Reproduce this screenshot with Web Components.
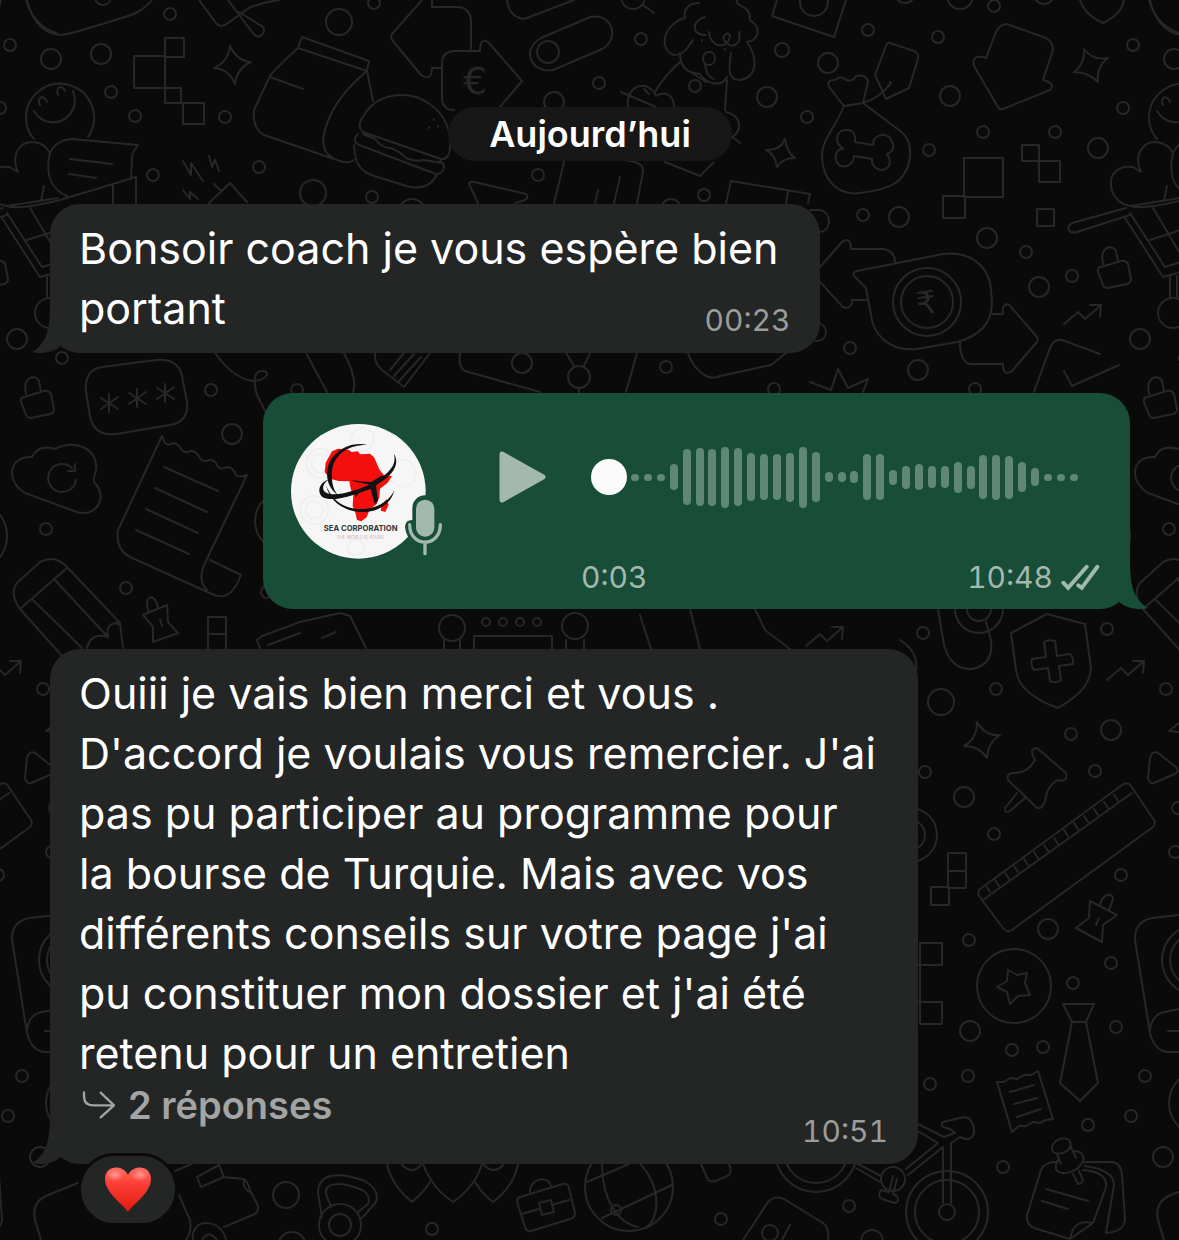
<!DOCTYPE html>
<html lang="fr">
<head>
<meta charset="UTF-8">
<meta name="viewport" content="width=device-width, initial-scale=1">
<title>Discussion</title>
<style>
    body {
        margin: 0;
        background: #0a0a0a;
        color: #fff;
        font-family: Inter, "Liberation Sans", sans-serif;
    }
</style>
</head>
<body>
<chat-screen>
    <date-pill>Aujourd’hui</date-pill>
    <chat-bubble time="00:23">Bonsoir coach je vous espère bien<br>portant</chat-bubble>
    <voice-bubble duration="0:03" time="10:48"></voice-bubble>
    <chat-bubble time="10:51">Ouiii je vais bien merci et vous .<br>D'accord je voulais vous remercier. J'ai<br>pas pu participer au programme pour<br>la bourse de Turquie. Mais avec vos<br>différents conseils sur votre page j'ai<br>pu constituer mon dossier et j'ai été<br>retenu pour un entretien
        <reply-link slot="replies">2 réponses</reply-link>
        <heart-reaction slot="reaction"></heart-reaction>
    </chat-bubble>
</chat-screen>

<script>
// circles scattered between the doodles: [x, y, radius]
const DOTS = [
    [170,14,6],[10,45,6],[51,59,10],[101,54,10],[111,92,6],[135,116,6],[225,117,6],[339,22,13],[374,3,6],
    [153,175,6],[259,167,6],[313,193,13],[372,197,6],[412,212,13],[538,175,6],[554,102,10],[548,52,11],
    [0,108,6],[599,83,6],[641,39,6],[782,50,7],[828,63,10],[695,86,6],[767,97,10],[807,117,6],[868,30,6],
    [938,37,6],[950,96,10],[929,150,6],[994,6,6],[983,132,6],[1055,132,6],[1098,148,10],[704,195,6],
    [671,209,10],[905,-7,10],[960,-4,13],[1044,-6,10],[103,-3,8],[814,2,14],[633,-3,12],[863,215,6],
    [899,217,10],[987,238,10],[1026,252,6],[1039,287,10],[1072,276,6],[17,339,10],[850,348,6],[918,370,10],
    [975,389,6],[817,332,9],[62,358,6],[211,390,6],[232,434,10],[46,529,6],[126,588,6],[267,592,6],
    [297,390,6],[522,363,10],[579,377,11],[666,367,6],[774,389,6],[923,633,6],[996,689,6],[941,702,13],
    [1107,629,6],[43,689,6],[1071,734,6],[1111,730,10],[925,772,6],[1095,771,6],[964,797,10],[994,834,6],
    [1121,875,6],[1048,929,10],[52,852,6],[55,808,6],[969,940,6],[1111,963,6],[1073,983,6],[970,1031,10],
    [1012,1050,6],[1043,1047,6],[1116,1027,6],[968,1076,6],[930,1084,6],[22,1076,6],[8,1116,6],[1088,1125,6],
    [1003,1167,6],[40,1157,10],[286,1195,13],[292,1246,14],[432,1229,6],[721,1219,6],[849,1206,6],
    [872,1241,11],[927,302,34],[927,302,26],[979,609,24],[979,609,12],[910,835,27],[910,835,15],
    [1014,986,37],[1202,1103,33],[1197,960,35],[1197,960,27],[947,1212,41],[947,1212,32],[947,1212,8],
    [816,1151,41],[816,1151,32],[893,1179,12],[340,1225,21],[340,1225,11],[629,1187,44],[616,1210,5],
    [1173,313,15],[452,628,13],[575,626,13],[486,622,4],[503,622,4],[520,622,4],[537,622,4],[770,1233,8],
    [-28,536,35],[285,521,30]
];

class ChatWallpaper extends HTMLElement {
    constructor() {
        super();
        this.attachShadow({ mode: "open" });
    }

    connectedCallback() {
        const dots = DOTS.map(([x, y, r]) => `<circle cx="${x}" cy="${y}" r="${r}"/>`).join("");
        this.shadowRoot.innerHTML = `
            <style>
                :host { display: block; overflow: hidden; }
                svg { display: block; width: 100%; height: 100%; }
                .art { fill: none; stroke: #272727; stroke-width: 2; stroke-linejoin: round; stroke-linecap: round; }
                text { fill: #272727; stroke: none; font-family: "DejaVu Sans", sans-serif; }
            </style>
            <svg aria-hidden="true">
                <g class="art">
                    <g id="tile">
                        ${dots}
                        <!-- top row -->
                        <path d="M27 0C32 22 46 38 67 34C92 28 115 20 134 14Q146 8 152 0"/>
                        <path d="M26 118a34 34 0 1 1 62 19M34 139Q26 130 26 118M34 111C42 125 60 126 70 114Q78 104 73 91M40 105C36 97 44 94 47 102M58 95C55 86 63 85 65 91"/>
                        <path d="M165 38h19v19h-19zM134 56h31v32h-31zM165 88h16v15h-16zM183 103h21v21h-21zM165 56v32"/>
                        <path d="M230 46Q237 61 251 62Q237 68 235 84Q229 69 214 68Q228 62 230 46z"/>
                        <path d="M199 0L216 23Q221 29 228 23L249 8Q263 2 279 0M228 0L252 32C258 42 267 33 263 27L239 12"/>
                        <path d="M302 37L369 61L367 71L298 48zM298 48Q276 68 270 76L254 110Q252 128 264 135L340 161Q348 164 354 160M367 71Q344 90 333 110C322 132 318 150 333 158M367 71L373 101M270 77L303 89"/>
                        <path d="M363 132Q356 126 364 115C378 92 410 90 428 103C445 113 452 133 450 148Q449 160 441 159zM358 134C352 140 355 144 362 146L436 174C445 174 446 164 440 161M363 134L375 139Q382 148 390 148Q398 150 406 158Q416 162 424 160L442 163M354 145C355 166 362 172 374 176L410 187Q430 190 437 174M434 119v1M429 127v1M438 126v1"/>
                        <path d="M422 0L392 34Q390 38 393 41L421 75Q432 82 432 68H442M432 0V7H459Q471 9 471 22V50"/>
                        <path d="M499 108L522 81L489 43Q480 36 480 51H454Q442 52 442 63V99Q443 110 454 110"/>
                        <path d="M507 0Q509 17 524 19L574 0M590 17L541 38C520 50 532 74 553 70L600 50C622 40 612 12 590 17z"/>
                        <path d="M685 18C683 8 690 3 699 3M737 0C735 8 751 4 750 20C762 28 759 40 747 42M685 18C663 24 658 50 674 55C683 55 687 49 693 40M680 53C680 70 690 73 700 74C706 84 722 88 727 77M705 63C705 70 708 77 714 79M731 53C729 67 727 80 739 80C758 78 758 58 747 42M705 17C692 20 690 35 706 35M709 32C710 48 728 50 730 36C728 30 722 36 724 40C730 50 742 46 739 32M702 40v1M725 49v1M680 62Q664 76 655 92M727 80L725 110M709 52c-8 0-8 13 0 13s8-13 0-13zM692 73L706 82"/>
                        <path d="M628 107C626 90 638 83 648 87Q655 92 656 96C666 90 674 96 674 107M621 92L656 107M644 89L649 94M726 112C743 116 742 132 732 137L740 143M643 5L654 13"/>
                        <path d="M777 0L772 16L834 37L846 0M665 162L700 176L714 162M726 203L731 181L810 194L808 203M788 192L786 203"/>
                        <path d="M844 106C836 126 822 140 822 155C822 180 838 196 860 193C884 190 906 186 910 157C911 139 905 135 899 130L863 103zM844 106L829 87Q826 80 835 80Q841 75 846 80Q853 82 856 76Q867 74 868 82L863 103Q880 98 891 83"/>
                        <path d="M855 142L873 145C873 132 890 132 892 142C896 149 890 153 887 154C896 166 882 175 875 167C871 164 872 161 872 159L854 156C854 168 838 170 836 160C835 152 838 149 843 149C832 140 838 129 847 130C854 130 856 136 855 142z"/>
                        <path d="M890 43L914 51Q919 53 918 59L909 88L886 99L875 75L886 46Q887 42 890 43zM890 82l1 1"/>
                        <path d="M1007 24L1046 38Q1053 42 1053 50L1043 80C1052 82 1054 86 1050 90L1003 109Q1000 110 998 107L974 66C972 57 977 55 986 58L996 32Q1000 24 1007 24z"/>
                        <path d="M1084 49Q1093 61 1108 58Q1096 67 1098 82Q1088 72 1074 72Q1085 64 1084 49zM785 139Q787 153 795 158Q782 158 777 167Q775 154 766 150Q780 151 785 139zM1080 0Q1085 15 1103 23Q1122 14 1124 0M1149 0Q1156 25 1179 33"/>
                        <path d="M1022 145h17v16h-17zM1039 161h21v21h-21zM964 158h39v39h-39zM943 196h22v22h-22zM1037 209h17v17h-17z"/>
                        <path d="M7 206C-18 202 -20 163 10 167L18 172C10 155 20 142 32 142Q44 142 50 153M67 196C48 188 46 170 50 153Q56 140 72 139L138 145Q131 154 132 160L131 177M70 159L112 164M69 174L96 178M136 203V177L60 200Q20 210 7 206M113 185v18M44 186L41 201"/>
                        <path d="M183 161L191 175V163L203 181M209 156L212 167L215 160L219 171M183 190L190 199V192L198 199M209 203L230 183L247 202M214 184L220 190"/>
                        <path d="M478 203L469 184Q470 181 474 182L526 194Q529 197 525 200L515 203M564 162L554 203M598 190L595 203M620 177L614 203M628 161Q644 162 643 172L637 203"/>
                        <!-- cart and locks -->
                        <path d="M3 208L-51 223C-58 228 -54 234 -46 232L7 215M2 218L40 277L58 272M7 213L42 267L58 262M30 208L58 255M27 240L58 230M47 277V298M54 276V298M7 206L58 198"/>
                        <path id="lock" d="M1098 268L1121 261Q1126 260 1128 264L1131 279Q1131 283 1127 284L1108 288Q1104 288 1103 285L1098 272Q1097 269 1100 267M1103 264C1099 246 1113 244 1116 251L1118 261"/>
                        <use href="#lock" x="-1077" y="130"/>
                        <!-- rupee bubble and arrows -->
                        <path d="M857 271L943 254C973 250 991 270 991 292C996 322 980 336 957 342L917 349C888 352 873 333 871 315L866 288L854 276Q852 272 857 271zM820 267L842 242Q851 236 851 249H883Q895 251 895 262M820 282L843 307Q852 310 852 300H867M992 314H1003C1002 304 1007 302 1011 307L1037 337Q1039 340 1036 343L1012 371Q1003 377 1003 364H970Q960 362 960 342"/>
                        <path id="trend" d="M1064 324L1078 312L1085 319L1101 305M1090 305H1101L1100 317"/>
                        <use href="#trend" x="43" y="356"/>
                        <use href="#trend" x="-258" y="322"/>
                        <path d="M1034 392L1050 348Q1053 339 1062 340L1100 354M1064 371L1072 386L1119 365M810 382L831 390L838 369L848 388L868 379L863 392M810 210H820Q829 212 829 222Q828 231 820 232"/>
                        <path d="M306 353L327 392M344 353Q358 380 353 392M375 353Q374 363 382 370L404 387L430 353M390 370L404 353M394 376L414 354M399 381L421 357M460 353Q458 368 465 371L540 392M566 353L574 366M590 353L584 366M637 353L626 392M688 353C694 370 708 382 720 376L771 365L786 353M579 388v5"/>
                        <!-- cloud, receipt, pencil -->
                        <path d="M25 493C4 480 10 455 32 457Q38 444 55 449C75 438 99 449 96 470Q93 479 94 482C108 497 97 514 83 513Q79 513 74 511zM76 480a14 14 0 1 1-4-12M75 464V471H68"/>
                        <path d="M102 367L156 360Q178 358 182 376L187 402Q189 422 170 425L117 434Q94 437 90 416L86 392Q84 370 102 367z"/>
                        <path d="M109 394v18M101 398l17 11M118 397l-17 12M137 389v18M129 393l17 11M146 392l-17 12M165 384v18M157 388l17 11M174 387l-17 12"/>
                        <path d="M215 353Q233 378 252 381C266 381 272 371 262 371C252 371 254 385 257 395L265 411"/>
                        <path d="M162 436L118 530Q115 549 130 557L212 594C228 602 236 588 241 575L210 560M247 475L205 563Q197 580 207 590M162 436L165 443Q169 446 173 443Q178 443 182 450Q186 454 190 451Q196 450 200 458Q204 463 209 460Q215 459 218 467Q222 470 227 467Q233 467 236 475Q240 478 247 475M164 467L218 491M155 488L207 512M146 509L198 533M136 530L189 554"/>
                        <path d="M63 657L20 609Q9 593 17 583L40 562Q55 554 67 567L120 623L123 648M20 609L67 568M33 600L82 648M54 579L108 637Q91 632 87 648M108 637C105 624 115 621 120 625"/>
                        <path d="M143 615L167 605L168 622L178 633L153 642V627zM149 612C142 596 155 591 158 608M160 619l2 7M208 617h18v17h-18zM208 634v20M226 634v20M300 622L262 636L257 640L260 648M300 633L268 645"/>
                        <path d="M300 622L340 613L350 616L366 648M322 638l14-6M444 640v9M460 640v9M566 640v9M584 640v9M474 649V636H552V649M640 615L651 649M690 609L700 649M755 609L765 630L790 649"/>
                        <!-- shield, pushpin, ruler -->
                        <path d="M938 609L944 645Q951 670 972 669Q994 665 991 640L986 622M900 640Q919 652 916 672"/>
                        <path d="M1047 614L1085 624L1091 668C1090 688 1073 699 1058 708C1036 700 1018 688 1016 670L1011 633zM1044 642Q1049 639 1055 641L1057 656L1070 654Q1074 658 1073 664L1059 666L1061 680Q1056 684 1050 681L1048 668L1034 670Q1030 665 1032 659L1046 657z"/>
                        <path d="M977 722Q986 737 1000 735Q988 742 987 758Q979 746 964 746Q977 739 977 722z"/>
                        <path d="M1033 756Q1030 748 1037 748L1066 773Q1068 783 1057 780Q1047 787 1046 797Q1043 810 1037 808L1008 780Q1006 773 1014 773Q1028 773 1035 760zM1017 793L1005 808Q1005 814 1010 811L1025 798M1150 758Q1152 750 1158 753L1176 767Q1180 771 1175 774L1154 783Q1149 784 1148 778zM1179 723L1169 731L1179 732"/>
                        <path d="M980 889L1122 785Q1127 781 1131 786L1154 820Q1156 824 1153 827L1012 930Q1007 933 1003 928L979 896Q977 892 980 889zM983 900L1132 793M986 886l4 6M995 880l4 6M1005 873l4 6M1014 866l4 6M1024 859l4 6M1034 852l4 6M1044 845l4 6M1054 838l4 6M1064 830l4 6M1074 823l4 6M1084 816l4 6M1094 809l4 6M1104 802l4 6M1114 795l4 6"/>
                        <path d="M948 853h18v18h-18zM948 871h18v17h-18zM931 887h18v18h-18zM920 943h22v22h-22zM920 965v37M920 1002h22v22h-22zM916 965h4M916 1002h4"/>
                        <path d="M1090 901L1117 915L1103 925L1102 942L1076 928L1089 918zM1100 904C1104 890 1117 894 1112 902L1109 910M1099 918l-3 7"/>
                        <!-- star coin, tie, note, camera -->
                        <path d="M1008 970L1017 975L1027 973L1025 983L1030 995L1018 996L1010 1004L1007 992L997 987L1007 981z"/>
                        <path d="M1063 1004H1094L1086 1022L1098 1083L1080 1101L1060 1083L1072 1022zM1072 1022H1086M997 1082l7 0l6-4l7 1l7-4l7 0l7-4l15 48l-7 1l-6 3l-7-1l-7 4l-7 0l-7 6zM1010 1092L1034 1085M1014 1104L1037 1098M1017 1117L1041 1109"/>
                        <path d="M1179 915L1152 918Q1134 922 1135 940L1150 1033Q1154 1050 1167 1052H1179M1150 1030Q1152 1014 1165 1012L1179 1009M1168 1031H1179"/>
                        <!-- bike -->
                        <path d="M916 1123L944 1137L955 1133Q950 1128 943 1127Q939 1122 947 1121L964 1117Q973 1117 974 1132Q972 1143 960 1137L951 1143V1203M943 1203V1147L908 1175M916 1130L938 1143L906 1169M856 1163L881 1176M856 1168L880 1182M893 1176L889 1192L881 1190Q877 1196 882 1199L895 1203Q900 1202 897 1196L893 1194L897 1179"/>
                        <!-- pinned notes -->
                        <path d="M1056 1162Q1044 1162 1041 1170L1027 1215Q1026 1224 1034 1228L1070 1239L1093 1223L1106 1187Q1108 1172 1083 1170M1085 1166Q1114 1170 1114 1185L1106 1233M1083 1162H1112Q1121 1163 1122 1175L1125 1220Q1124 1231 1107 1233M1046 1189L1088 1201M1042 1201L1068 1209M1070 1239C1073 1222 1082 1221 1093 1223"/>
                        <path d="M1053 1152C1048 1143 1062 1135 1069 1140C1076 1149 1060 1157 1053 1152zM1057 1154L1061 1164M1071 1147L1076 1158M1059 1158C1048 1176 1068 1176 1078 1168C1088 1158 1083 1151 1073 1151M1073 1174L1078 1184Q1082 1184 1083 1180L1079 1171"/>
                        <!-- bottom row -->
                        <path d="M78 1183L48 1195Q31 1202 35 1220L41 1240M175 1171L192 1164M179 1195L190 1220Q192 1232 186 1240M197 1177L219 1165L224 1177L201 1187zM224 1177L243 1179Q248 1181 250 1190L258 1206Q259 1211 255 1214L224 1227M244 1180Q242 1188 250 1192M193 1240C190 1217 222 1218 226 1240M202 1240Q209 1229 217 1240"/>
                        <path d="M322 1217L318 1193C318 1172 340 1172 365 1181Q380 1190 376 1202L362 1218M331 1207L326 1194C324 1180 345 1183 362 1190Q371 1195 368 1204L358 1212M387 1164Q392 1186 412 1202Q424 1192 430 1182M423 1164Q432 1188 453 1202Q475 1187 482 1164M475 1182Q482 1194 493 1202Q514 1186 518 1164M402 1165Q412 1175 421 1165M484 1165Q494 1175 503 1165"/>
                        <path d="M520 1197L563 1184Q568 1183 569 1188L575 1213Q575 1218 570 1219L531 1231Q526 1232 525 1227L517 1202Q517 1198 520 1197zM530 1194C528 1178 549 1174 551 1187M522 1214L539 1209M552 1205L569 1200M539 1203L551 1200L554 1212L542 1215z"/>
                        <path d="M587 1182L629 1164M602 1164C602 1200 618 1223 638 1227M640 1164C662 1187 660 1220 645 1228M602 1218L672 1185M701 1164L708 1180Q712 1183 718 1180L729 1175Q732 1171 729 1164M743 1240L768 1202Q775 1195 784 1199L823 1223Q830 1229 828 1240M790 1225L782 1240"/>
                    </g>
                    <use href="#tile" x="1123"/>
                    <use href="#tile" x="-1123"/>
                </g>
                <text x="463" y="94" font-size="38">€</text>
                <text x="916" y="314" font-size="32" transform="rotate(-8 927 302)">₹</text>
            </svg>
        `;
    }
}

class ChatScreen extends HTMLElement {
    constructor() {
        super();
        this.attachShadow({ mode: "open" });
        this.shadowRoot.innerHTML = `
            <style>
                :host {
                    display: block;
                    position: relative;
                    min-height: 100vh;
                    overflow: hidden;
                }
                chat-wallpaper { position: absolute; inset: 0; }
                main {
                    position: relative;
                    display: flex;
                    flex-direction: column;
                    align-items: flex-start;
                    gap: 40px;
                    padding: 107px 49px 76px 50px;
                }
            </style>
            <chat-wallpaper></chat-wallpaper>
            <main><slot></slot></main>
        `;
    }
}

class DatePill extends HTMLElement {
    constructor() {
        super();
        this.attachShadow({ mode: "open" });
        this.shadowRoot.innerHTML = `
            <style>
                :host {
                    display: block;
                    align-self: center;
                    margin-bottom: 3px;
                    padding: 0 41px;
                    border-radius: 27px;
                    background: #171717;
                    font-size: 36px;
                    font-weight: 600;
                    line-height: 54px;
                }
            </style>
            <slot></slot>
        `;
    }
}

class ChatBubble extends HTMLElement {
    constructor() {
        super();
        this.attachShadow({ mode: "open" });
    }

    connectedCallback() {
        this.shadowRoot.innerHTML = `
            <style>
                :host {
                    display: grid;
                    position: relative;
                    box-sizing: border-box;
                    max-width: 100%;
                    padding: 14px 30px 15px 29px;
                    border-radius: 30px;
                    background: #242626;
                }
                .text {
                    grid-area: 1 / 1;
                    padding-right: 12px;
                    font-size: 43px;
                    line-height: 60px;
                }
                time {
                    grid-area: 1 / 1;
                    place-self: end;
                    color: #9b9c9c;
                    font-size: 30px;
                    font-variant-numeric: tabular-nums;
                    line-height: 36px;
                }
                .tail {
                    position: absolute;
                    left: -18px;
                    bottom: 0;
                    fill: #242626;
                }
            </style>
            <svg class="tail" width="30" height="48" viewBox="0 0 30 48" aria-hidden="true">
                <path d="M18 0C18 25 14 39 0 47C12 50 24 46 30 40V0z"/>
            </svg>
            <div class="text"><slot></slot><slot name="replies"></slot></div>
            <time>${this.getAttribute("time")}</time>
            <slot name="reaction"></slot>
        `;
    }
}

class ReplyLink extends HTMLElement {
    constructor() {
        super();
        this.attachShadow({ mode: "open" });
        this.shadowRoot.innerHTML = `
            <style>
                :host { display: block; padding-bottom: 22px; line-height: 44px; }
                button {
                    display: flex;
                    align-items: center;
                    gap: 12px;
                    padding: 0 0 0 3px;
                    border: none;
                    background: none;
                    color: #a3a4a4;
                    font: inherit;
                    font-size: 38px;
                    font-weight: 600;
                    line-height: 44px;
                    cursor: pointer;
                }
                svg { fill: none; stroke: currentColor; stroke-width: 7; stroke-linecap: round; stroke-linejoin: round; }
            </style>
            <button type="button">
                <svg width="34" height="28" viewBox="245 97 100 84" aria-hidden="true">
                    <path d="M250 101V112Q250 140 278 140H340M300 102L340 140L300 176"/>
                </svg>
                <slot></slot>
            </button>
        `;
    }
}

class HeartReaction extends HTMLElement {
    constructor() {
        super();
        this.attachShadow({ mode: "open" });
        this.shadowRoot.innerHTML = `
            <style>
                :host { display: block; position: absolute; left: 28px; bottom: -62px; }
                button {
                    display: grid;
                    place-items: center;
                    box-sizing: border-box;
                    width: 100px;
                    height: 73px;
                    padding: 0;
                    border: 3px solid #0a0a0a;
                    border-radius: 37px;
                    background: #242626;
                    cursor: pointer;
                }
            </style>
            <button type="button" aria-label="❤️">
                <svg width="46" height="46" viewBox="0 0 46 46" aria-hidden="true">
                    <defs>
                        <linearGradient id="red" x1="0" y1="0" x2="0" y2="1">
                            <stop offset="0" stop-color="#ff6a60"/>
                            <stop offset=".35" stop-color="#fb4038"/>
                            <stop offset="1" stop-color="#e3170f"/>
                        </linearGradient>
                        <radialGradient id="shine">
                            <stop offset="0" stop-color="#ffc4bd" stop-opacity=".6"/>
                            <stop offset="1" stop-color="#ffc4bd" stop-opacity="0"/>
                        </radialGradient>
                    </defs>
                    <path fill="url(#red)" d="M23 45C19 38 0 26 0 12C0 -2 18 -3 23 8C28 -3 46 -2 46 12C46 26 27 38 23 45z"/>
                    <ellipse cx="10" cy="8" rx="9" ry="6" fill="url(#shine)"/>
                    <ellipse cx="35" cy="8" rx="9" ry="6" fill="url(#shine)"/>
                </svg>
            </button>
        `;
    }
}

class SenderAvatar extends HTMLElement {
    constructor() {
        super();
        this.attachShadow({ mode: "open" });
        this.shadowRoot.innerHTML = `
            <style>
                :host { display: block; }
                svg { display: block; }
                text { font-family: Inter, sans-serif; text-anchor: middle; }
            </style>
            <svg width="152" height="135" viewBox="35 42 456 405">
                <circle cx="237" cy="244" r="202" fill="#f6f6f6"/>
                <g fill="none" stroke="#efefef" stroke-width="5">
                    <circle cx="125" cy="160" r="28"/><circle cx="125" cy="160" r="44"/>
                    <circle cx="105" cy="300" r="26"/><circle cx="105" cy="300" r="42"/>
                    <circle cx="370" cy="190" r="40"/><circle cx="250" cy="88" r="34"/>
                    <circle cx="230" cy="412" r="24"/>
                </g>
                <path fill="#f40f0c" d="M158 124L176 116L208 119L216 126L236 124L242 133L272 131L284 142L301 180L314 196L338 198L325 218L302 236L300 262L292 282L280 292L268 306L262 322L246 334L233 330L228 308L220 288L222 256L214 236L210 214L178 213L152 206L136 186L139 158z"/>
                <path fill="#f40f0c" d="M322 268L328 284L318 306L304 302L308 282z"/>
                <path fill="#111" d="M264 105C205 104 164 135 158 182C155 215 163 245 178 256C152 240 140 213 144 180C152 128 210 92 264 105z"/>
                <path fill="#111" d="M344 132C365 165 335 203 285 227C240 252 160 279 130 262C112 247 118 218 150 208C124 224 126 247 150 252C190 257 250 235 285 216C330 190 353 165 344 132z"/>
                <path fill="#111" d="M140 226C165 286 214 302 262 296C305 290 333 268 345 240C337 278 303 303 258 306C205 309 153 282 140 226z"/>
                <path fill="#111" d="M216 211L274 217L306 197Q320 197 312 206L290 227L296 272L286 282L274 237L240 248L228 262L229 244L274 224L222 214z"/>
                <text x="244" y="363" font-size="23" font-weight="700" fill="#333">SEA CORPORATION</text>
                <text x="243" y="387" font-size="13" fill="#d4a9a9">THE WORLD IS YOURS</text>
                <path fill="#184d38" d="M437 256a38 38 0 0 0-38 38v36q-22 0-22 22q4 32 26 46h88V256z"/>
                <rect x="410" y="269" width="55" height="111" rx="27" fill="#a3b8af"/>
                <path fill="none" stroke="#a3b8af" stroke-width="10" stroke-linecap="round" d="M391 344C391 414 483 414 483 344M437 398V431"/>
            </svg>
        `;
    }
}

class VoiceWave extends HTMLElement {
    constructor() {
        super();
        this.attachShadow({ mode: "open" });
    }

    connectedCallback() {
        const levels = [7, 7, 7, 26, 56, 58, 57, 61, 58, 48, 46, 46, 49, 61, 50, 10, 10, 12, 46, 46, 15, 23,
            26, 22, 22, 31, 23, 44, 45, 43, 30, 18, 7, 7, 7];
        this.shadowRoot.innerHTML = `
            <style>
                :host { display: block; position: relative; height: 62px; }
                .bars {
                    display: flex;
                    align-items: center;
                    justify-content: space-between;
                    height: 100%;
                    padding-left: 40px;
                }
                .bars i { width: 8px; border-radius: 4px; background: #5f8676; }
                input {
                    position: absolute;
                    inset: 0;
                    width: 100%;
                    height: 100%;
                    margin: 0;
                    background: none;
                    appearance: none;
                    cursor: pointer;
                }
                input::-webkit-slider-thumb {
                    appearance: none;
                    width: 36px;
                    height: 36px;
                    border-radius: 50%;
                    background: #fbfbfb;
                }
            </style>
            <div class="bars">${levels.map(h => `<i style="height:${h}px"></i>`).join("")}</div>
            <input type="range" min="0" max="3" step="0.1" value="0" aria-label="Position">
        `;
    }
}

class VoiceBubble extends HTMLElement {
    constructor() {
        super();
        this.attachShadow({ mode: "open" });
    }

    connectedCallback() {
        this.shadowRoot.innerHTML = `
            <style>
                :host {
                    display: flex;
                    position: relative;
                    align-self: flex-end;
                    box-sizing: border-box;
                    width: 867px;
                    max-width: 100%;
                    padding: 31px 30px 14px 28px;
                    border-radius: 30px;
                    background: #184d38;
                }
                sender-avatar { flex: none; margin-right: 56px; }
                .play {
                    flex: none;
                    align-self: flex-start;
                    width: 47px;
                    height: 52px;
                    margin: 27px 35px 0 0;
                    padding: 0;
                    border: none;
                    background: none;
                    cursor: pointer;
                }
                .play svg { display: block; fill: #a3b8af; stroke: #a3b8af; stroke-width: 5; stroke-linejoin: round; }
                .player { flex: 1; min-width: 0; }
                voice-wave { margin: 22px 22px 51px 10px; }
                .meta {
                    display: flex;
                    align-items: center;
                    justify-content: space-between;
                    color: #a3b8af;
                    font-size: 30px;
                    font-variant-numeric: tabular-nums;
                    line-height: 36px;
                }
                .sent { display: flex; align-items: center; gap: 8px; }
                .sent svg { fill: none; stroke: currentColor; stroke-width: 12; stroke-linecap: round; }
                .tail {
                    position: absolute;
                    right: -18px;
                    bottom: 0;
                    fill: #184d38;
                }
            </style>
            <svg class="tail" width="30" height="48" viewBox="0 0 30 48" aria-hidden="true">
                <path d="M12 0C12 25 16 39 30 47C18 50 6 46 0 40V0z"/>
            </svg>
            <sender-avatar></sender-avatar>
            <button class="play" type="button" aria-label="Lecture">
                <svg width="47" height="52" viewBox="0 0 47 52" aria-hidden="true"><path d="M3 3L44 26L3 49z"/></svg>
            </button>
            <div class="player">
                <voice-wave></voice-wave>
                <div class="meta">
                    <span>${this.getAttribute("duration")}</span>
                    <span class="sent">
                        <time>${this.getAttribute("time")}</time>
                        <svg width="39" height="27" viewBox="484 37 120 82" aria-hidden="true">
                            <path d="M491 94L506 110L563 45M537 102L548 110L596 45"/>
                        </svg>
                    </span>
                </div>
            </div>
        `;
    }
}

customElements.define("chat-wallpaper", ChatWallpaper);
customElements.define("chat-screen", ChatScreen);
customElements.define("date-pill", DatePill);
customElements.define("reply-link", ReplyLink);
customElements.define("heart-reaction", HeartReaction);
customElements.define("chat-bubble", ChatBubble);
customElements.define("sender-avatar", SenderAvatar);
customElements.define("voice-wave", VoiceWave);
customElements.define("voice-bubble", VoiceBubble);
</script>
</body>
</html>
